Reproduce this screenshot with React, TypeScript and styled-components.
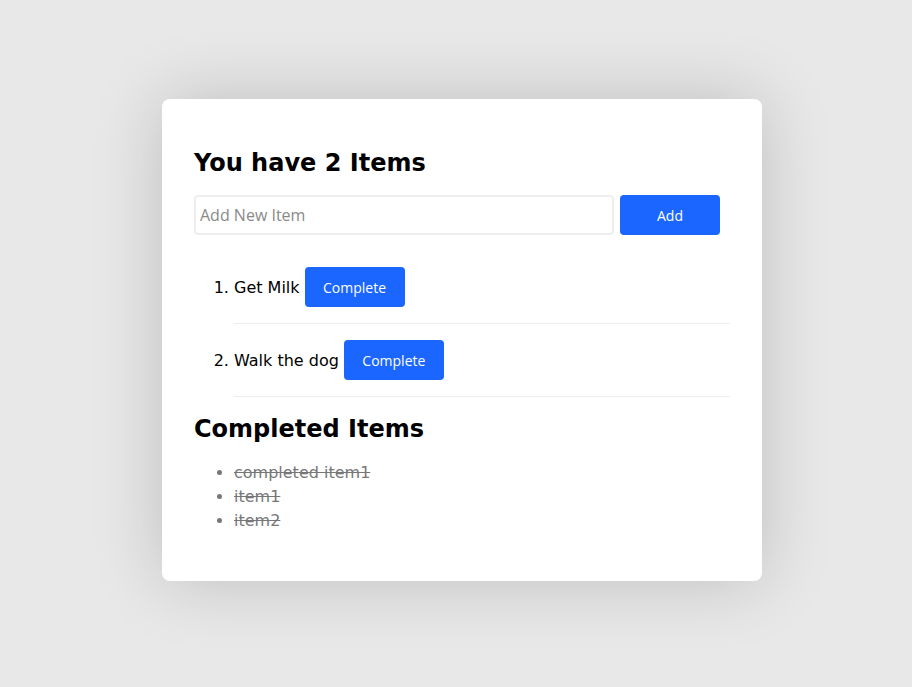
import React, { useState } from "react";
import styled, { createGlobalStyle } from "styled-components";

const GlobalStyle = createGlobalStyle`
  html, body {
    margin: 0;
    padding: 0;
    background: #e8e8e8;
  }
  body {
    font-family: "DejaVu Sans", sans-serif;
  }
`;

const Page = styled.div`
  min-height: 687px;
  display: flex;
  align-items: flex-start;
  justify-content: center;
  padding: 99px 0 0 12px;
  box-sizing: border-box;
`;

const Card = styled.div`
  width: 600px;
  box-sizing: border-box;
  padding: 32px;
  background: #fff;
  border-radius: 8px;
  box-shadow: 0 0 70px rgba(0, 0, 0, 0.18);
`;

const Title = styled.h2`
  margin: 18px 0;
  font-size: 24px;
  font-weight: bold;
  color: #000;
`;

const AddRow = styled.form`
  display: flex;
  gap: 6px;
  align-items: center;
`;

const Input = styled.input`
  width: 420px;
  height: 40px;
  box-sizing: border-box;
  border: 2px solid #eee;
  border-radius: 4px;
  padding: 0 4px;
  font-family: "Open Sans", "Noto Sans", sans-serif;
  font-size: 16px;
  color: #333;
  outline: none;
  &::placeholder {
    color: #8a8a8a;
  }
`;

const Button = styled.button`
  width: 100px;
  height: 40px;
  border: none;
  border-radius: 4px;
  background: #1a66ff;
  color: #fff;
  font-family: "Open Sans", "Noto Sans", sans-serif;
  font-size: 14px;
  cursor: pointer;
`;

const TodoList = styled.ol`
  margin: 16px 0 0;
  padding-left: 40px;
  font-size: 16px;
  color: #000;
`;

const TodoItem = styled.li`
  padding: 16px 0;
  border-bottom: 1px solid #eee;
`;

const ItemText = styled.span`
  margin-right: 5px;
`;

const DoneList = styled.ul`
  margin: 16px 0;
  padding-left: 40px;
  font-size: 16px;
  line-height: 24px;
  color: #777;
`;

const DoneItem = styled.li`
  text-decoration: line-through;
`;

export default function App() {
  const [text, setText] = useState("");
  const [items, setItems] = useState(["Get Milk", "Walk the dog"]);
  const [done, setDone] = useState(["completed item1", "item1", "item2"]);

  const add = (e: React.FormEvent) => {
    e.preventDefault();
    if (!text.trim()) return;
    setItems([...items, text.trim()]);
    setText("");
  };

  const complete = (i: number) => {
    setDone([...done, items[i]]);
    setItems(items.filter((_, idx) => idx !== i));
  };

  return (
    <>
      <GlobalStyle />
      <Page>
        <Card>
          <Title>You have {items.length} Items</Title>
          <AddRow onSubmit={add}>
            <Input
              placeholder="Add New Item"
              value={text}
              onChange={(e) => setText(e.target.value)}
            />
            <Button type="submit">Add</Button>
          </AddRow>
          <TodoList>
            {items.map((item, i) => (
              <TodoItem key={item + i}>
                <ItemText>{item}</ItemText>
                <Button type="button" onClick={() => complete(i)}>
                  Complete
                </Button>
              </TodoItem>
            ))}
          </TodoList>
          <Title>Completed Items</Title>
          <DoneList>
            {done.map((d, i) => (
              <DoneItem key={d + i}>{d}</DoneItem>
            ))}
          </DoneList>
        </Card>
      </Page>
    </>
  );
}
